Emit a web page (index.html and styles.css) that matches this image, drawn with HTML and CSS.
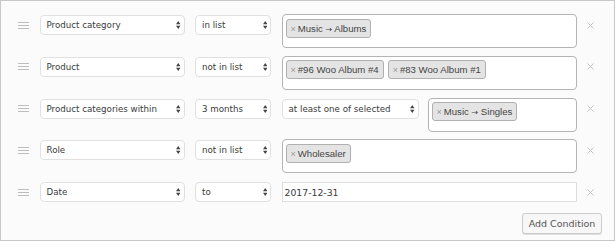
FILE: index.html
```html
<!DOCTYPE html>
<html lang="en">
<head>
    <meta charset="UTF-8">
    <title>Conditions</title>
    <link rel="stylesheet" href="styles.css">
</head>
<body>
    <div class="conditions">
        <div class="rows">
            <div class="row">
                <span class="handle"><i></i><i></i><i></i></span>
                <div class="select sel-field"><span>Product category</span><svg class="arrow" viewBox="0 0 5 9"><path d="M0 3.6L2.5 0L5 3.6ZM0 5.4L2.5 9L5 5.4Z"/></svg></div>
                <div class="select sel-op"><span>in list</span><svg class="arrow" viewBox="0 0 5 9"><path d="M0 3.6L2.5 0L5 3.6ZM0 5.4L2.5 9L5 5.4Z"/></svg></div>
                <div class="value">
                    <div class="multi">
                        <span class="tag"><b>×</b>Music <em>→</em> Albums</span>
                    </div>
                </div>
                <span class="remove"><svg viewBox="0 0 8 8"><path d="M0.5 0.5L7.5 7.5M7.5 0.5L0.5 7.5"/></svg></span>
            </div>

            <div class="row">
                <span class="handle"><i></i><i></i><i></i></span>
                <div class="select sel-field"><span>Product</span><svg class="arrow" viewBox="0 0 5 9"><path d="M0 3.6L2.5 0L5 3.6ZM0 5.4L2.5 9L5 5.4Z"/></svg></div>
                <div class="select sel-op"><span>not in list</span><svg class="arrow" viewBox="0 0 5 9"><path d="M0 3.6L2.5 0L5 3.6ZM0 5.4L2.5 9L5 5.4Z"/></svg></div>
                <div class="value">
                    <div class="multi">
                        <span class="tag"><b>×</b>#96 Woo Album #4</span>
                        <span class="tag"><b>×</b>#83 Woo Album #1</span>
                    </div>
                </div>
                <span class="remove"><svg viewBox="0 0 8 8"><path d="M0.5 0.5L7.5 7.5M7.5 0.5L0.5 7.5"/></svg></span>
            </div>

            <div class="row">
                <span class="handle"><i></i><i></i><i></i></span>
                <div class="select sel-field"><span>Product categories within</span><svg class="arrow" viewBox="0 0 5 9"><path d="M0 3.6L2.5 0L5 3.6ZM0 5.4L2.5 9L5 5.4Z"/></svg></div>
                <div class="select sel-op"><span>3 months</span><svg class="arrow" viewBox="0 0 5 9"><path d="M0 3.6L2.5 0L5 3.6ZM0 5.4L2.5 9L5 5.4Z"/></svg></div>
                <div class="value split">
                    <div class="select sel-mode"><span>at least one of selected</span><svg class="arrow" viewBox="0 0 5 9"><path d="M0 3.6L2.5 0L5 3.6ZM0 5.4L2.5 9L5 5.4Z"/></svg></div>
                    <div class="multi">
                        <span class="tag"><b>×</b>Music <em>→</em> Singles</span>
                    </div>
                </div>
                <span class="remove"><svg viewBox="0 0 8 8"><path d="M0.5 0.5L7.5 7.5M7.5 0.5L0.5 7.5"/></svg></span>
            </div>

            <div class="row">
                <span class="handle"><i></i><i></i><i></i></span>
                <div class="select sel-field"><span>Role</span><svg class="arrow" viewBox="0 0 5 9"><path d="M0 3.6L2.5 0L5 3.6ZM0 5.4L2.5 9L5 5.4Z"/></svg></div>
                <div class="select sel-op"><span>not in list</span><svg class="arrow" viewBox="0 0 5 9"><path d="M0 3.6L2.5 0L5 3.6ZM0 5.4L2.5 9L5 5.4Z"/></svg></div>
                <div class="value">
                    <div class="multi">
                        <span class="tag"><b>×</b>Wholesaler</span>
                    </div>
                </div>
                <span class="remove"><svg viewBox="0 0 8 8"><path d="M0.5 0.5L7.5 7.5M7.5 0.5L0.5 7.5"/></svg></span>
            </div>

            <div class="row">
                <span class="handle"><i></i><i></i><i></i></span>
                <div class="select sel-field"><span>Date</span><svg class="arrow" viewBox="0 0 5 9"><path d="M0 3.6L2.5 0L5 3.6ZM0 5.4L2.5 9L5 5.4Z"/></svg></div>
                <div class="select sel-op"><span>to</span><svg class="arrow" viewBox="0 0 5 9"><path d="M0 3.6L2.5 0L5 3.6ZM0 5.4L2.5 9L5 5.4Z"/></svg></div>
                <div class="value">
                    <input class="text" type="text" value="2017-12-31">
                </div>
                <span class="remove"><svg viewBox="0 0 8 8"><path d="M0.5 0.5L7.5 7.5M7.5 0.5L0.5 7.5"/></svg></span>
            </div>
        </div>

        <div class="actions">
            <button class="btn">Add Condition</button>
        </div>
    </div>
</body>
</html>
```

FILE: styles.css
```css
body {
    margin: 0;
    font-family: 'DejaVu Sans', Verdana, sans-serif;
    color: #444;
    background: #fff;
}

.conditions {
    box-sizing: border-box;
    width: 615px;
    background: #fbfbfb;
    border: 1px solid #c8c8c8;
    padding: 13px 12px 6.5px 17px;
}

.rows {
    display: flex;
    flex-direction: column;
    gap: 7.75px;
}

.row {
    display: flex;
    align-items: flex-start;
    gap: 10.5px;
}

.handle {
    width: 11px;
    height: 20px;
    margin-top: 1px;
    display: flex;
    flex-direction: column;
    justify-content: center;
    gap: 2px;
}

.handle i {
    display: block;
    height: 1px;
    background: #bdbdbd;
}

.select {
    box-sizing: border-box;
    height: 20px;
    margin-top: 1px;
    display: flex;
    align-items: center;
    justify-content: space-between;
    background: #fff;
    border: 1px solid #e0e0e0;
    border-radius: 4px;
    padding: 0 3px 0 6px;
    font-size: 8.7px;
    color: #3a3a3a;
    white-space: nowrap;
}

.sel-field { width: 145px; }
.sel-op { width: 76px; }
.sel-mode { width: 137px; flex: none; }

.arrow {
    width: 4.5px;
    height: 8px;
    fill: #444;
}

.value {
    width: 295px;
    display: flex;
    align-items: flex-start;
}

.value.split { gap: 9px; }

.multi {
    box-sizing: border-box;
    flex: 1;
    min-height: 34px;
    background: #fff;
    border: 1px solid #b4b4b4;
    border-radius: 4px;
    padding: 3.5px 3px;
    display: flex;
    flex-wrap: wrap;
    align-content: flex-start;
    gap: 4px;
}

.tag {
    box-sizing: border-box;
    height: 19px;
    display: inline-block;
    line-height: 17px;
    background: #e4e4e4;
    border: 1px solid #b0b0b0;
    border-radius: 3px;
    padding: 0 4px;
    font-family: 'Liberation Sans', Arial, sans-serif;
    font-size: 9.6px;
    color: #444;
    white-space: nowrap;
}

.tag b {
    font-weight: normal;
    color: #999;
    font-size: 9px;
    margin-right: 2px;
}

.tag em {
    font-style: normal;
    font-family: 'DejaVu Sans', sans-serif;
    font-size: 8px;
}

.text {
    box-sizing: border-box;
    width: 100%;
    height: 20px;
    margin: 1px 0 0;
    border: 1px solid #ddd;
    border-radius: 0;
    background: #fff;
    padding: 0 2px;
    font-family: 'DejaVu Sans', Verdana, sans-serif;
    font-size: 9.3px;
    color: #3a3a3a;
    outline: none;
}

.remove {
    width: 8px;
    height: 20px;
    margin-top: 1px;
    display: flex;
    align-items: center;
}

.remove svg {
    width: 7px;
    height: 7px;
    stroke: #c4c4c4;
    stroke-width: 1.1;
    fill: none;
}

.actions {
    display: flex;
    justify-content: flex-end;
    margin-top: 11px;
}

.btn {
    box-sizing: border-box;
    height: 20.5px;
    width: 80px;
    padding: 0;
    background: #f7f7f7;
    border: 1px solid #ccc;
    border-radius: 3px;
    box-shadow: 0 1px 0 #ddd;
    font-family: 'DejaVu Sans', Verdana, sans-serif;
    font-size: 9.5px;
    color: #555;
    cursor: pointer;
}
```
